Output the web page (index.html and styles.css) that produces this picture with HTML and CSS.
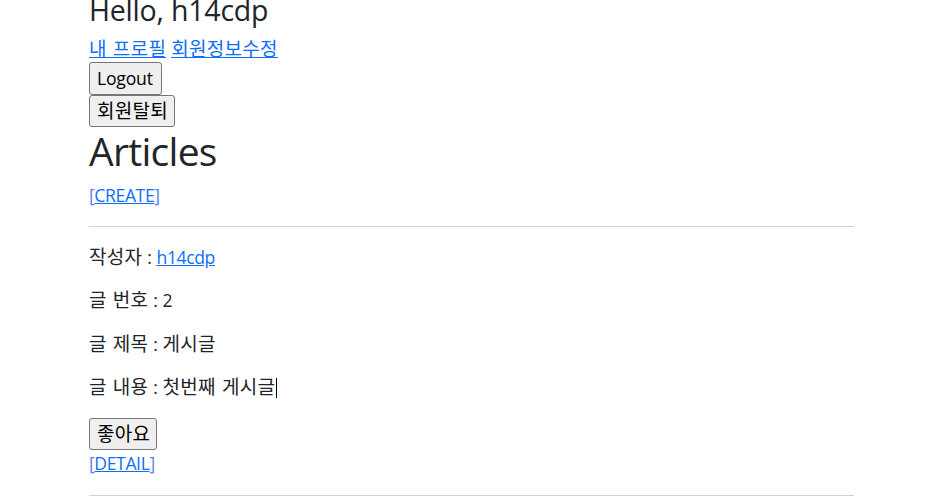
FILE: index.html
```html
<!DOCTYPE html>
<html lang="ko">
<head>
<meta charset="utf-8">
<title>Articles</title>
<link rel="stylesheet" href="styles.css">
</head>
<body>
<div class="container">
  <h3 class="greeting">Hello, h14cdp</h3>
  <div class="user-links"><a href="#" class="ko">내 프로필</a> <a href="#" class="ko">회원정보수정</a></div>
  <form class="inline-form"><button type="button" class="btn">Logout</button></form>
  <form class="inline-form"><button type="button" class="btn ko">회원탈퇴</button></form>
  <h1 class="title">Articles</h1>
  <p><a href="#" class="bracket-link"><span class="br">[</span><span class="ul">CREATE</span><span class="br">]</span></a></p>
  <hr class="divider">
  <div class="article">
    <p><span class="ko">작성자</span> : <a href="#">h14cdp</a></p>
    <p><span class="ko">글 번호</span> : 2</p>
    <p><span class="ko">글 제목</span> : <span class="ko">게시글</span></p>
    <p><span class="ko">글 내용</span> : <span class="ko">첫번째 게시글</span><span class="caret"></span></p>
    <form class="inline-form like-form"><button type="button" class="btn ko">좋아요</button></form>
    <a href="#" class="bracket-link"><span class="br">[</span><span class="ul">DETAIL</span><span class="br">]</span></a>
    <hr class="divider last">
  </div>
</div>
</body>
</html>
```
FILE: styles.css
```css
html {
  font-size: 17.6px;
}
body {
  margin: 0;
  font-family: "Open Sans", "Noto Sans CJK KR", sans-serif;
  font-size: 1rem;
  line-height: 26.5px;
  letter-spacing: -0.4px;
  word-spacing: 0.8px;
  color: #212529;
  background: #fff;
}
.container {
  width: 765px;
  margin-left: 89px;
  margin-top: -7px;
}
a {
  color: #0d6efd;
  text-decoration: underline;
}
.ko {
  font-size: 19px;
  letter-spacing: 0.3px;
}
.greeting {
  font-size: 28.5px;
  font-weight: 400;
  line-height: 1.2;
  letter-spacing: -0.2px;
  word-spacing: 0;
  margin: 0 0 8.8px;
}
.user-links {
  margin: 0;
}
.inline-form {
  margin: 0;
}
.like-form {
  margin-top: 1px;
}
.btn {
  font-family: inherit;
  font-size: 17.6px;
  line-height: inherit;
  letter-spacing: -0.2px;
  color: #000;
  background: #efefef;
  border: 1px solid #767676;
  border-radius: 3px;
  padding: 2px 8px 2px 7px;
  margin: 0;
  display: inline-block;
}
.btn.ko {
  font-size: 19px;
  letter-spacing: 0.3px;
  padding: 2px 6px 2px 7px;
}
.title {
  font-size: 39px;
  font-weight: 400;
  line-height: 1.2;
  letter-spacing: -0.7px;
  margin: 1px 0 6.8px;
}
p {
  margin: 0 0 17px;
}
.bracket-link {
  text-decoration: none;
}
.bracket-link .ul {
  text-decoration: underline;
}
.bracket-link .br {
  color: #5a7dfd;
}
.divider {
  border: 0;
  border-top: 1px solid #cfd0d1;
  margin: 17px 0;
  height: 0;
}
.divider.last {
  margin-top: 18px;
}
.caret {
  display: inline-block;
  width: 1px;
  height: 20px;
  background: #000;
  vertical-align: -4px;
  margin-left: 1px;
}
```
